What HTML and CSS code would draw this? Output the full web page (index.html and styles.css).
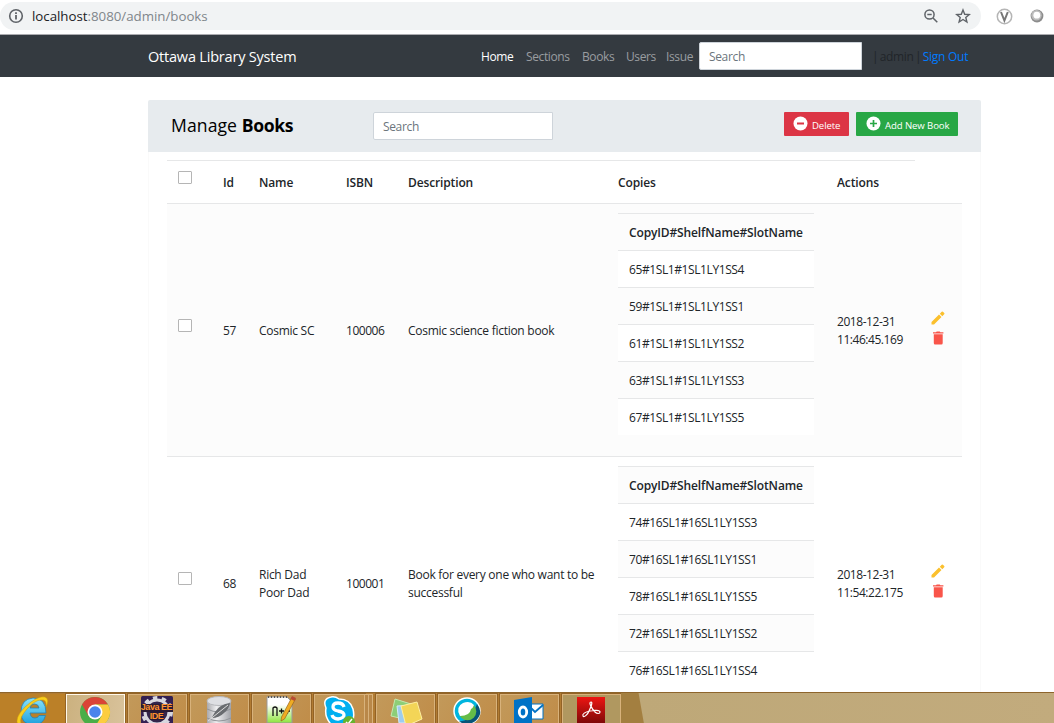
FILE: index.html
```html
<!DOCTYPE html>
<html lang="en">
<head>
<meta charset="utf-8">
<title>Ottawa Library System</title>
<link rel="stylesheet" href="styles.css">
</head>
<body>
<div class="browser">
  <div class="address">
    <svg class="info" width="16" height="16" viewBox="0 0 16 16" fill="none" stroke="#5f6368" stroke-width="1.6"><circle cx="8" cy="8" r="6.3"/><path d="M8 7v4.5M8 4.2v1.7" stroke-width="1.8"/></svg>
    <div class="url"><span class="host">localhost</span>:8080/admin/books</div>
    <svg width="16" height="16" viewBox="0 0 16 16" fill="none" stroke="#5f6368" stroke-width="1.5"><circle cx="6.5" cy="6.5" r="4.6"/><path d="M10 10l4.3 4.3M4.3 6.5h4.4"/></svg>
    <svg class="star" width="16" height="16" viewBox="0 0 16 16" fill="none" stroke="#5f6368" stroke-width="1.4"><path d="M8 2l1.7 4.3 4.6.3-3.5 2.9 1.1 4.5L8 11.5 4.1 14l1.1-4.5-3.5-2.9 4.6-.3z"/></svg>
  </div>
  <svg class="ext-v" width="17" height="17" viewBox="0 0 17 17" fill="none"><circle cx="8.5" cy="8.5" r="7.2" fill="#fff" stroke="#b5b5b5" stroke-width="1.5"/><path d="M5 4l3.4 8.500 3.4-8.500" stroke="#777" stroke-width="2"/></svg>
  <svg class="ext-o" width="14" height="14" viewBox="0 0 14 14"><circle cx="7" cy="7" r="6.4" fill="#8c8c8c"/><circle cx="6.500" cy="6.200" r="5.200" fill="#bdbdbd"/><circle cx="6.800" cy="6.200" r="3.400" fill="#fff"/></svg>
</div>
<nav class="navbar">
  <div class="brand">Ottawa Library System</div>
  <a class="link active n1">Home</a><a class="link n2">Sections</a><a class="link n3">Books</a><a class="link n4">Users</a><a class="link n5">Issue</a>
  <div class="input nav-input">Search</div>
  <div class="user">| admin | <a class="signout">Sign Out</a></div>
</nav>
<main class="card">
  <header class="title-bar">
    <h1 class="title">Manage <b>Books</b></h1>
    <div class="input page-input">Search</div>
    <div class="btn delete"><svg width="15" height="15" viewBox="0 0 15 15"><circle cx="7.5" cy="7.5" r="7" fill="#fff"/><path d="M4 7.5h7" stroke="#dc3545" stroke-width="2"/></svg><span>Delete</span></div>
    <div class="btn add"><svg width="15" height="15" viewBox="0 0 15 15"><circle cx="7.5" cy="7.5" r="7" fill="#fff"/><path d="M4 7.5h7M7.5 4v7" stroke="#28a745" stroke-width="1.7"/></svg><span>Add New Book</span></div>
  </header>
  <div class="card-body">
  <section class="table">
    <div class="row head">
      <div class="cell"><i class="check"></i></div><div class="cell">Id</div><div class="cell">Name</div><div class="cell">ISBN</div><div class="cell">Description</div><div class="cell">Copies</div><div class="cell">Actions</div>
    </div>
    <div class="row body odd">
      <div class="cell"><i class="check"></i></div><div class="cell num">57</div><div class="cell">Cosmic SC</div><div class="cell num">100006</div><div class="cell">Cosmic science fiction book</div>
      <div class="cell copies"><div class="copy ch">CopyID#ShelfName#SlotName</div><div class="copy">65#1SL1#1SL1LY1SS4</div><div class="copy">59#1SL1#1SL1LY1SS1</div><div class="copy">61#1SL1#1SL1LY1SS2</div><div class="copy">63#1SL1#1SL1LY1SS3</div><div class="copy">67#1SL1#1SL1LY1SS5</div></div>
      <div class="cell date">2018-12-31<br>11:46:45.169</div>
      <div class="cell icons"><svg width="14" height="14" viewBox="0 0 14 14" fill="#fbc02d"><path d="M.5 11v2.500H3l7.500-7.500L8 3.500zM8.800 2.700l2.500 2.500 1.900-1.900q.6-.6 0-1.200L11.900.8q-.6-.6-1.200 0z"/></svg><svg width="14" height="14" viewBox="0 0 14 14" fill="#f9554a"><path d="M2 1.200h3L5.700.5h3l.7.700h3v1.200H2zM2.800 3.200h8.900v8.700q0 1.600-1.300 1.600H4.100q-1.300 0-1.300-1.600z"/></svg></div>
    </div>
    <div class="row body">
      <div class="cell"><i class="check"></i></div><div class="cell num">68</div><div class="cell">Rich Dad<br>Poor Dad</div><div class="cell num">100001</div><div class="cell">Book for every one who want to be<br>successful</div>
      <div class="cell copies"><div class="copy ch">CopyID#ShelfName#SlotName</div><div class="copy">74#16SL1#16SL1LY1SS3</div><div class="copy">70#16SL1#16SL1LY1SS1</div><div class="copy">78#16SL1#16SL1LY1SS5</div><div class="copy">72#16SL1#16SL1LY1SS2</div><div class="copy">76#16SL1#16SL1LY1SS4</div></div>
      <div class="cell date">2018-12-31<br>11:54:22.175</div>
      <div class="cell icons"><svg width="14" height="14" viewBox="0 0 14 14" fill="#fbc02d"><path d="M.5 11v2.500H3l7.500-7.500L8 3.500zM8.800 2.700l2.500 2.500 1.900-1.900q.6-.6 0-1.200L11.900.8q-.6-.6-1.200 0z"/></svg><svg width="14" height="14" viewBox="0 0 14 14" fill="#f9554a"><path d="M2 1.200h3L5.700.5h3l.7.700h3v1.200H2zM2.800 3.200h8.900v8.700q0 1.600-1.300 1.600H4.100q-1.300 0-1.300-1.600z"/></svg></div>
    </div>
  </section>
  </div>
</main>
<footer class="taskbar">
  <div class="task ie"><svg width="40" height="31" viewBox="0 0 40 31"><defs><linearGradient id="ieg" x2="0" y2="1"><stop stop-color="#8be4fb"/><stop offset="1" stop-color="#1c9fdc"/></linearGradient></defs><path d="M34 21H18q.5 5 5 5 3 0 4-2.500h6.500Q31 33 22 33 9 33 9 20 9 7 21 6q13 0 13 15zM18 16h9q-.5-4-4.500-4T18 16z" fill="url(#ieg)" stroke="#2382b5" stroke-width=".8"/><path d="M6 33Q2 26 13 15 26 3 33 5q5 2 1 10 1-8-5-7-6 0-14 9Q7 26 9 31z" fill="#f9cf1c" stroke="#c99508" stroke-width=".5"/></svg></div>
  <div class="task current"><svg width="32" height="31" viewBox="0 0 32 31"><circle cx="16" cy="20" r="15" fill="#4aae48"/><path d="M3 12.500A15 15 0 0 1 29 12.500H16L9.500 24z" fill="#da4437"/><path d="M16 12.500h13A15 15 0 0 1 16 35l6.500-11z" fill="#fccd3f"/><circle cx="16" cy="20" r="7.500" fill="#fff"/><circle cx="16" cy="20" r="5.800" fill="#4a84ec"/></svg></div>
  <div class="task"><div class="ide-icon"><svg class="gear" width="32" height="31" viewBox="0 0 32 31"><rect y="4" width="32" height="32" rx="1.500" fill="#332052"/><circle cx="16" cy="20" r="12" fill="#32254b" stroke="#d7d7df" stroke-width="3"/><circle cx="16" cy="20" r="14.500" fill="none" stroke="#d7d7df" stroke-width="3" stroke-dasharray="4.500 4.600"/><path d="M0 12h32v8h-9v8H9v-8H0z" fill="#2a1a33"/></svg><div class="ide"><span>Java EE</span><span>IDE</span></div></div></div>
  <div class="task"><svg width="32" height="31" viewBox="0 0 32 31"><defs><linearGradient id="dbg"><stop stop-color="#a9a9ad"/><stop offset=".4" stop-color="#efeff1"/><stop offset="1" stop-color="#a1a3a8"/></linearGradient></defs><path d="M4 9v22h24V9z" fill="url(#dbg)"/><path d="M4 17q12 6 24 0M4 26q12 6 24 0" fill="none" stroke="#92959a"/><ellipse cx="16" cy="9" rx="12" ry="4.500" fill="#dedfe3" stroke="#b6b7bb"/><path d="M27 11q-10 1-15 9-3 5-3 6 7 0 12-5 5-4 6-10z" fill="#696c70"/><path d="M5 29l20-16" stroke="#ddd" stroke-width="1"/></svg></div>
  <div class="task"><svg width="34" height="31" viewBox="0 0 34 31"><defs><linearGradient id="npg" x2="0" y2="1"><stop offset=".3" stop-color="#fff"/><stop offset="1" stop-color="#8de53c"/></linearGradient></defs><path d="M3 5h20l5 5v21H3z" fill="url(#npg)" stroke="#999"/><path d="M4 5h20" stroke="#555" stroke-width="2" stroke-dasharray="1 2"/><path d="M9 24v-8q2-2 4 0v8M15 19h5m-2.500-2.500v5M21 19h5m-2.500-2.500v5" fill="none" stroke="#111" stroke-width="1.300"/><path d="M28 5l3.500 2-11 20-3.500 2 .5-4z" fill="#efac23" stroke="#8c5715" stroke-width=".6"/><path d="M28 4l4 2-1.500 3-4-2z" fill="#b94b34"/></svg></div>
  <div class="task stack"><svg width="34" height="31" viewBox="0 0 34 31"><path d="M4 16Q0 7 9 5q4-1 8 2 11 0 14 10 3 13-6 18H12Q2 27 4 16z" fill="#00aff0" stroke="#fff" stroke-width="1.500"/><path d="M22 15q-1-4-6-4t-5 4q0 3 5 4 6 1 6 4t-6 4q-5-.5-6-4" fill="none" stroke="#fff" stroke-width="3.300"/><circle cx="27" cy="30" r="6" fill="#65b42e"/><path d="M24 30l2 2 4-5" stroke="#fff" stroke-width="1.500" fill="none"/></svg></div>
  <div class="stack-edges"><i></i><i></i></div>
  <div class="task"><svg width="36" height="31" viewBox="0 0 36 31"><path d="M8 7l16 5-3 16-17-4z" fill="#8dce77" stroke="#c4e8ae"/><path d="M10 14l17-1v18H12z" fill="#9dccef" stroke="#d4eafb"/><path d="M14 14l16-4 5 17-16 7z" fill="#f3d557" stroke="#fff0a1"/></svg></div>
  <div class="task"><svg width="32" height="31" viewBox="0 0 32 31"><circle cx="16" cy="19" r="13" fill="#00b5df" stroke="#fff" stroke-width="1.500"/><path d="M26 12q7 9-1 16.500-8 6.500-17 1 12-1 13-9 4-4 5-8.500z" fill="#075478"/><circle cx="16.500" cy="19.500" r="8.800" fill="#65bc48"/><path d="M9 24Q4 15 12 11q7-3 11 2-1 3-3 4-1 7-11 7z" fill="#fff"/></svg></div>
  <div class="task"><svg width="32" height="31" viewBox="0 0 32 31"><path d="M15 12h15v15H15z" fill="#fff" stroke="#0072c6"/><path d="M15 13l7 7 8-7" fill="none" stroke="#0072c6" stroke-width="1.800"/><path d="M1 8l18-3v26H1z" fill="#0072c6"/><ellipse cx="10" cy="20" rx="3.700" ry="5" fill="none" stroke="#fff" stroke-width="2.800"/></svg></div>
  <div class="task acro"><svg width="28" height="31" viewBox="0 0 28 31"><defs><linearGradient id="acg" x2="0" y2="1"><stop stop-color="#ed1512"/><stop offset="1" stop-color="#7f0808"/></linearGradient></defs><path d="M0 5h28v26H0z" fill="url(#acg)"/><path d="M14 10c-3 0 1 7 4 10 2 2 5 2 5 0s-6-2-10-1c-5 1-8 3-7 5s5-2 6-5c2-4 4-9 2-9z" fill="none" stroke="#fff" stroke-width="1.200"/></svg></div>
  <div class="wall"></div>
</footer>
</body>
</html>
```
FILE: styles.css
```css
* { box-sizing: border-box; }
body { margin: 0; width: 1054px; height: 723px; overflow: hidden; background: #fff; color: #212529; font: 12px/18px "Open Sans", "Noto Sans", sans-serif; letter-spacing: -.27px; display: flex; flex-direction: column; }
svg { display: block; flex: none; }
.browser { height: 35px; flex: none; display: flex; align-items: flex-start; border-bottom: 1px solid #acacb0; }
.address { margin-top: 2px; width: 981px; height: 28px; border-radius: 14px; background: #f1f3f4; display: flex; align-items: center; padding: 0 10px 0 8px; }
.url { font-size: 13.3px; letter-spacing: -.02px; color: #80868b; flex: 1; padding-left: 8px; }
.host { color: #202124; }
.star { margin-left: 16px; }
.ext-v { margin: 8px 0 0 15px; }
.ext-o { margin: 9px 0 0 17px; }
.navbar { height: 42px; flex: none; background: #343a40; display: flex; align-items: center; padding: 2px 0 0 148px; }
.brand { width: 333px; color: #fff; font-size: 14.5px; letter-spacing: -.2px; }
.link { color: #9a9da0; white-space: nowrap; letter-spacing: -.38px; }
.active { color: #fff; }
.n1 { width: 45px; }
.n2 { width: 56px; }
.n3 { width: 44px; }
.n4 { width: 40px; }
.n5 { width: 33px; }
.input { height: 28px; border: 1px solid #ced4da; background: #fff; color: #6c757d; border-radius: 2px 0 0 2px; padding: 5px 9px 3px; letter-spacing: -.35px; }
.nav-input { width: 163px; margin-top: -2px; }
.user { margin-left: 10px; white-space: nowrap; letter-spacing: -.38px; word-spacing: -1.2px; }
.signout { color: #007bff; letter-spacing: -.25px; word-spacing: 0; }
.card { margin: 23px 0 0 148px; width: 833px; height: 592px; flex: none; overflow: hidden; border-radius: 2px 2px 0 0; }
.title-bar { height: 52px; background: #e7ebee; display: flex; align-items: flex-start; padding: 12px 23px 0; }
.title { margin: 1px 0 0; width: 202px; font-size: 17.600px; line-height: 24px; font-weight: 400; letter-spacing: .08px; color: #000; white-space: nowrap; }
.title b { font-weight: 700; letter-spacing: -.4px; }
.page-input { width: 180px; }
.btn { height: 24px; color: #fff; border-radius: 1px; font-size: 9.6px; letter-spacing: -.1px; display: flex; padding: 4px 0 0 9px; white-space: nowrap; }
.btn span { padding: 1px 0 0 4px; }
.delete { background: #dc3545; width: 65px; margin-left: 231px; }
.add { background: #28a745; width: 102px; margin-left: 7px; padding-left: 10px; }
.card-body { height: 540px; padding: 8px 18px 0; border: solid #fafafa; border-width: 0 1px; }
.table { width: 795px; }
.row { display: grid; grid-template-columns: 45px 36px 87px 62px 210px 219px 89px 47px; border-top: 1px solid #e6e7e8; align-items: center; }
.cell { padding: 2px 0 0 11px; white-space: nowrap; }
.num { letter-spacing: -.48px; }
.date { letter-spacing: -.45px; }
.head { height: 43px; width: 748px; font-weight: 600; letter-spacing: -.13px; }
.body { height: 253px; }
.odd { background: #fcfcfc; }
.check { display: block; width: 14px; height: 13px; margin-bottom: 12px; border: 1px solid #b5b5b5; border-radius: 1px; background: #fff; }
.copies { align-self: start; padding-top: 9px; width: 207px; }
.copy { height: 37px; border-top: 1px solid #e6e7e8; background: #fff; padding: 10px 0 0 11px; letter-spacing: -.4px; }
.copy:nth-child(odd) { background: #fcfcfc; }
.copy.ch { font-weight: 600; letter-spacing: -.13px; }
.icons { display: flex; flex-direction: column; gap: 6px; padding: 0 0 4px 16px; }
.taskbar { height: 31px; flex: none; display: flex; overflow: hidden; background: #b17b32; border-top: 1px solid #8e652c; }
.task { width: 59px; height: 40px; flex: none; margin: 1px 3px 0 0; display: flex; align-items: flex-start; justify-content: center; border: 1px solid #d8b27b; background: linear-gradient(120deg, #c2995a, #c08c48); box-shadow: 0 0 0 1px #936326; }
.task svg { margin: -3px 0 0 -2px; }
.task.ie { width: 65px; margin-right: 1px; border: 0; box-shadow: none; background: #bb8028; }
.ie svg { margin-top: -2px; }
.task.current { background: linear-gradient(100deg, #cbb17f, #d9c39c); border-color: #fff8e9; }
.ide-icon { display: grid; }
.ide-icon > * { grid-area: 1 / 1; }
.ide { display: flex; flex-direction: column; align-items: center; margin: 8px 0 0 -2px; color: #ff922e; font: 700 9px/9px "Liberation Sans", Arial, sans-serif; letter-spacing: -.45px; white-space: nowrap; width: 32px; }
.ide span { height: 9px; }
.task.stack { width: 51px; margin-right: 0; }
.stack-edges { width: 8px; margin: 1px 3px 0 0; display: flex; flex: none; }
.stack-edges i { width: 4px; border: solid #d8b27b; border-width: 1px 1px 0 0; background: #b98849; }
.task.acro { background: #b09860; margin-right: 0; }
.wall { flex: 1; background: linear-gradient(80deg, #a37f40 0 22px, #bea878 23px, #c2ab7d); }
```
